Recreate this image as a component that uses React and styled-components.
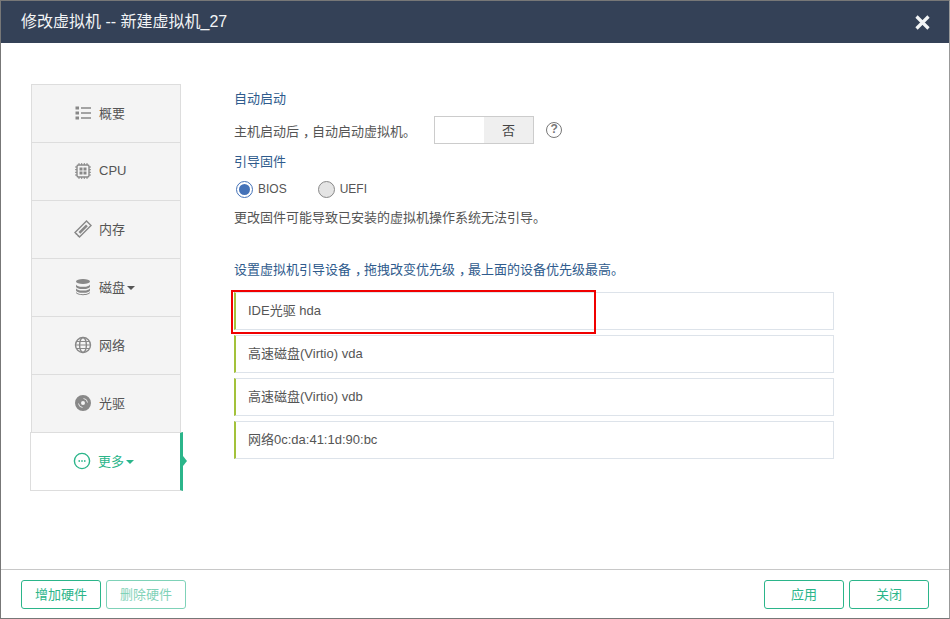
import React from "react";
import styled, { createGlobalStyle } from "styled-components";

const Global = createGlobalStyle`
  html, body { margin: 0; padding: 0; background: #fff; }
  body { font-family: "Liberation Sans", "Noto Sans CJK SC", sans-serif; font-size: 13px; color: #555; }
  * { box-sizing: border-box; }
`;

const Dialog = styled.div`
  width: 950px;
  height: 619px;
  border: 1px solid #777;
  border-right-color: #999;
  display: flex;
  flex-direction: column;
  background: #fff;
`;

const Header = styled.div`
  height: 42px;
  flex: none;
  background: #344157;
  color: #f2f4f6;
  display: flex;
  align-items: center;
  justify-content: space-between;
  padding: 0 19px 0 20px;
  font-size: 16px;
`;

const Title = styled.span`
  padding-bottom: 5px;
`;

const Body = styled.div`
  flex: 1;
  display: flex;
  padding: 41px 0 0 30px;
`;

const Tabs = styled.div`
  width: 150px;
  flex: none;
  display: flex;
  flex-direction: column;
  align-self: flex-start;
  background: #f4f4f4;
  border-top: 1px solid #ddd;
`;

const Tab = styled.div`
  position: relative;
  height: 58px;
  display: flex;
  align-items: center;
  gap: 7px;
  font-size: 13px;
  padding: 0 0 2px 42px;
  border-bottom: 1px solid #ddd;
  border-left: 1px solid #ddd;
  border-right: 1px solid #ddd;
  color: ${p => (p.$active ? "#2bb58a" : "#555")};
  background: ${p => (p.$active ? "#fff" : "transparent")};
  ${p => p.$active && `
    margin: -1px -2px 0 -1px;
    height: 59px;
    border-top: 1px solid #ddd;
    border-right: 3px solid #2bb58a;
    &::after {
      content: "";
      position: absolute;
      right: -7px;
      top: 23px;
      border-left: 4px solid #2bb58a;
      border-top: 5px solid transparent;
      border-bottom: 5px solid transparent;
    }
  `}
`;

const TabLabel = styled.span`
  display: inline-flex;
  align-items: center;
  gap: 2px;
`;

const Caret = styled.i`
  display: inline-block;
  margin-top: 2px;
  border-top: 4px solid currentColor;
  border-left: 4px solid transparent;
  border-right: 4px solid transparent;
`;

const Content = styled.div`
  margin-left: 53px;
  width: 600px;
  display: flex;
  flex-direction: column;
`;

const SectionTitle = styled.div`
  height: 18px;
  line-height: 18px;
  margin-top: ${p => p.$top || 0}px;
  color: #2f5b8d;
`;

const Line = styled.div`
  display: flex;
  align-items: center;
  height: ${p => p.$h || 18}px;
  margin-top: ${p => p.$top || 0}px;
`;

/* comma sits in the middle of its cell in the reference */
const Comma = styled.span`
  padding-left: 4px;
  letter-spacing: -4px;
`;

const Toggle = styled.div`
  width: 100px;
  height: 28px;
  margin-left: 18px;
  border: 1px solid #ccc;
  display: flex;
  justify-content: flex-end;
`;

const ToggleOff = styled.div`
  width: 49px;
  background: #efefef;
  color: #444;
  display: flex;
  align-items: center;
  justify-content: center;
  padding-bottom: 2px;
`;

const Help = styled.div`
  width: 16px;
  height: 16px;
  margin-left: 12px;
  border: 1.5px solid #777;
  border-radius: 50%;
  color: #777;
  font-size: 12px;
  font-weight: 700;
  line-height: 13px;
  text-align: center;
`;

const Radio = styled.span`
  width: 17px;
  height: 17px;
  margin-left: 2px;
  margin-right: 5px;
  border-radius: 50%;
  border: 1px solid ${p => (p.$on ? "#4472b8" : "#888")};
  background: ${p => (p.$on ? "#fff" : "#e4e4e4")};
  display: inline-flex;
  align-items: center;
  justify-content: center;
  &::after {
    content: "";
    display: ${p => (p.$on ? "block" : "none")};
    width: 11px;
    height: 11px;
    border-radius: 50%;
    background: #4472b8;
  }
`;

const RadioText = styled.span`
  font-size: 12px;
  margin-right: 29px;
`;

const DeviceList = styled.div`
  margin-top: 13px;
  display: flex;
  flex-direction: column;
  gap: 5px;
`;

const Device = styled.div`
  position: relative;
  height: 38px;
  padding: 0 0 3px 12px;
  display: flex;
  align-items: center;
  border: 1px solid #dde3ea;
  border-left: 2px solid #a3c23a;
  color: #555;
`;

const Highlight = styled.div`
  position: absolute;
  left: -5px;
  top: -3px;
  width: 365px;
  height: 44px;
  border: 2px solid #f00000;
`;

const Footer = styled.div`
  height: 49px;
  flex: none;
  border-top: 1px solid #c8c8c8;
  padding: 10px 20px 0;
  display: flex;
  gap: 5px;
`;

const Btn = styled.button`
  width: ${p => p.$w || 80}px;
  height: 29px;
  padding: 0 0 3px;
  font: inherit;
  background: #fff;
  color: #2bb58a;
  border: 1px solid #2bb58a;
  border-radius: 3px;
  opacity: ${p => (p.disabled ? 0.6 : 1)};
`;

const Spacer = styled.div`
  flex: 1;
`;

const Icon = styled.svg`
  width: 18px;
  height: 18px;
  flex: none;
  fill: none;
  stroke: ${p => (p.$active ? "#2bb58a" : "#888")};
  stroke-width: 1.4;
`;

const ListIcon = () => (
  <Icon viewBox="0 0 18 18">
    <path d="M1.5 2.5h3.5v3h-3.5zM1.5 7.5h3.5v3h-3.5zM1.5 12.5h3.5v3h-3.5z" fill="#888" stroke="none" />
    <path d="M7 4h10M7 9h10M7 14h10" />
  </Icon>
);

const CpuIcon = () => (
  <Icon viewBox="0 0 18 18">
    <rect x="3" y="3" width="12" height="12" rx="1.5" />
    <path d="M5.5 5.5h3v3h-3zM9.5 5.5h3v3h-3zM5.5 9.5h3v3h-3zM9.5 9.5h3v3h-3z" fill="#888" stroke="none" />
    <path d="M5 1v2M7.7 1v2M10.3 1v2M13 1v2M5 15v2M7.7 15v2M10.3 15v2M13 15v2M1 5h2M1 7.7h2M1 10.3h2M1 13h2M15 5h2M15 7.7h2M15 10.3h2M15 13h2" strokeWidth="1" />
  </Icon>
);

const MemoryIcon = () => (
  <Icon viewBox="0 0 18 18">
    <path d="M1 12.5L12.5 1l4.5 4.5L5.5 17z" />
    <path d="M4.5 12l7.5-7.5 1.8 1.8L6.3 13.8z" fill="#888" stroke="none" />
    <path d="M3 14.5l-1-1M5 16.5l-1-1" />
  </Icon>
);

const DiskIcon = () => (
  <Icon viewBox="0 0 18 18">
    <ellipse cx="9" cy="3.5" rx="7" ry="2.6" fill="#888" stroke="none" />
    <path d="M2 6.2c0 1.5 3 2.6 7 2.6s7-1.1 7-2.6v2.2c0 1.5-3 2.6-7 2.6s-7-1.1-7-2.6z" fill="#888" stroke="none" />
    <path d="M2 10c0 1.5 3 2.6 7 2.6s7-1.1 7-2.6v2.2c0 1.5-3 2.6-7 2.6s-7-1.1-7-2.6z" fill="#888" stroke="none" />
    <path d="M2 13.6c0 1.5 3 2.6 7 2.6s7-1.1 7-2.6v1c0 1.5-3 2.6-7 2.6s-7-1.1-7-2.6z" fill="#888" stroke="none" />
  </Icon>
);

const GlobeIcon = () => (
  <Icon viewBox="0 0 18 18">
    <circle cx="9" cy="9" r="7.5" />
    <ellipse cx="9" cy="9" rx="3.4" ry="7.5" />
    <path d="M1.5 9h15M2.5 5.5h13M2.5 12.5h13" strokeWidth="1.1" />
  </Icon>
);

const DiscIcon = () => (
  <Icon viewBox="0 0 18 18">
    <path
      fillRule="evenodd"
      d="M9 1a8 8 0 1 1 0 16A8 8 0 0 1 9 1zm0 6a2 2 0 1 0 0 4 2 2 0 0 0 0-4z"
      fill="#888"
      stroke="none"
    />
    <path d="M9.5 4.5A4.5 4.5 0 0 1 13.5 8.5M8.5 13.5A4.5 4.5 0 0 1 4.5 9.5" stroke="#e6e6e6" strokeWidth="1" />
  </Icon>
);

const MoreIcon = () => (
  <Icon $active viewBox="0 0 18 18">
    <circle cx="9" cy="9" r="7.6" />
    <path d="M5.6 9h1.2M8.4 9h1.2M11.2 9h1.2" strokeWidth="1.8" />
  </Icon>
);

const CloseIcon = styled.svg`
  width: 15px;
  height: 15px;
  stroke: #f2f4f6;
  stroke-width: 3.2;
`;

const tabs = [
  { label: "概要", icon: <ListIcon /> },
  { label: "CPU", icon: <CpuIcon /> },
  { label: "内存", icon: <MemoryIcon /> },
  { label: "磁盘", icon: <DiskIcon />, caret: true },
  { label: "网络", icon: <GlobeIcon /> },
  { label: "光驱", icon: <DiscIcon /> },
  { label: "更多", icon: <MoreIcon />, caret: true, active: true },
];

const devices = ["IDE光驱 hda", "高速磁盘(Virtio) vda", "高速磁盘(Virtio) vdb", "网络0c:da:41:1d:90:bc"];

export default function App() {
  return (
    <React.Fragment>
      <Global />
      <Dialog>
        <Header>
          <Title>修改虚拟机 -- 新建虚拟机_27</Title>
          <CloseIcon viewBox="0 0 15 15">
            <path d="M1.5 1.5l12 12M13.5 1.5l-12 12" />
          </CloseIcon>
        </Header>
        <Body>
          <Tabs>
            {tabs.map(t => (
              <Tab key={t.label} $active={t.active}>
                {t.icon}
                <TabLabel>
                  {t.label}
                  {t.caret && <Caret />}
                </TabLabel>
              </Tab>
            ))}
          </Tabs>
          <Content>
            <SectionTitle $top={6}>自动启动</SectionTitle>
            <Line $h={28} $top={8}>
              <span>主机启动后<Comma>，</Comma>自动启动虚拟机。</span>
              <Toggle>
                <ToggleOff>否</ToggleOff>
              </Toggle>
              <Help>?</Help>
            </Line>
            <SectionTitle $top={9}>引导固件</SectionTitle>
            <Line $top={9}>
              <Radio $on />
              <RadioText>BIOS</RadioText>
              <Radio />
              <RadioText>UEFI</RadioText>
            </Line>
            <Line $top={9}>更改固件可能导致已安装的虚拟机操作系统无法引导。</Line>
            <SectionTitle $top={36}>
              设置虚拟机引导设备<Comma>，</Comma>拖拽改变优先级<Comma>，</Comma>最上面的设备优先级最高。
            </SectionTitle>
            <DeviceList>
              {devices.map((d, i) => (
                <Device key={d}>
                  {d}
                  {i === 0 && <Highlight />}
                </Device>
              ))}
            </DeviceList>
          </Content>
        </Body>
        <Footer>
          <Btn>增加硬件</Btn>
          <Btn disabled>删除硬件</Btn>
          <Spacer />
          <Btn>应用</Btn>
          <Btn>关闭</Btn>
        </Footer>
      </Dialog>
    </React.Fragment>
  );
}
